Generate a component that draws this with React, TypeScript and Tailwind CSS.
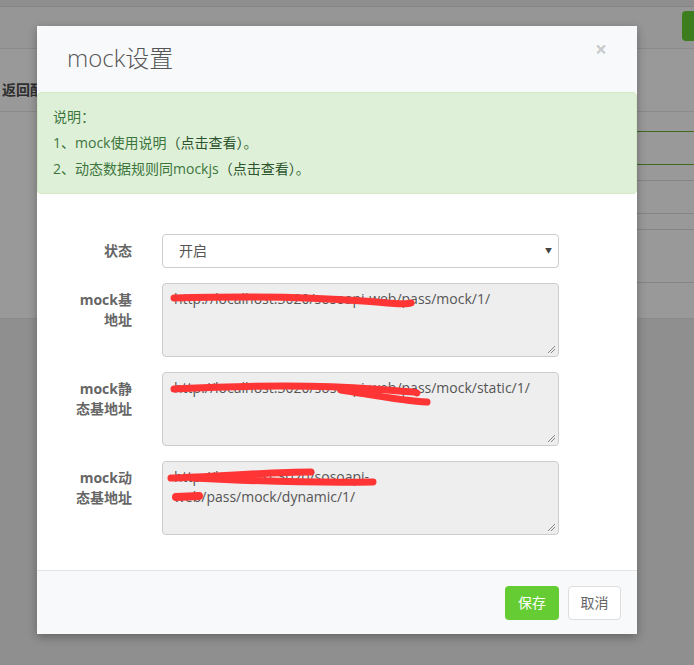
const font = { fontFamily: "'Open Sans', 'Noto Sans CJK SC', sans-serif" };

type Stroke = { d: string; w?: number };

function Grip() {
  return (
    <svg className="absolute right-[2px] bottom-[2px]" width="9" height="9" viewBox="0 0 9 9">
      <path d="M1 8 L8 1 M4 8 L8 4" stroke="#888" strokeWidth="1" />
    </svg>
  );
}

function MockField({ label, lines, strokes }: { label: React.ReactNode; lines: string[]; strokes: Stroke[] }) {
  return (
    <div className="flex">
      <label className="w-[95px] px-[15px] pt-[7px] text-right text-sm font-bold leading-5 text-[#666]">{label}</label>
      <div className="w-[427px] px-[15px]">
        <div className="relative h-[74px] rounded border border-[#ccc] bg-[#eee] px-[11px] pt-[5px] text-sm leading-5 text-[#555] whitespace-nowrap">
          {lines.map((l) => (
            <div key={l}>{l}</div>
          ))}
          <svg className="absolute left-0 top-0" width="397" height="74">
            {strokes.map((s, i) => (
              <path key={i} d={s.d} fill="none" stroke="#ff3434" strokeWidth={s.w ?? 7} strokeLinecap="round" />
            ))}
          </svg>
          <Grip />
        </div>
      </div>
    </div>
  );
}

export default function App() {
  return (
    <div className="relative h-[665px] w-[694px] overflow-hidden bg-[#8f8f90]" style={font}>
      {/* page behind the backdrop */}
      <div className="h-[7px] border-b border-[#868686] bg-[#8e8e8e]" />
      <div className="flex h-[42px] justify-end border-b border-[#8a8a8a] bg-[#969696] pt-[4px]">
        <div className="-mr-[20px] h-[30px] w-[32px] rounded bg-[#3d7d1e]" />
      </div>
      <div className="bg-[#999]">
        <div className="flex h-[63px] items-end border-b border-[#8a8a8a] pb-[11px] pl-[2px] text-sm font-bold text-[#2f2f2f]">
          返回配置
        </div>
        <div className="flex h-[207px] justify-end border-b border-[#8a8a8a]">
          <div className="w-[120px]">
            <div className="h-[20px] border-b border-[#41691f]" />
            <div className="h-[33px] border-b border-[#41691f]" />
            <div className="h-[16px] border-b border-[#858585]" />
            <div className="h-[33px] border-b border-[#858585]" />
            <div className="h-[16px] border-b border-[#858585]" />
            <div className="h-[53px] border-b border-[#858585]" />
          </div>
        </div>
      </div>

      {/* modal */}
      <div className="absolute left-[37px] top-[26px] w-[600px] bg-white shadow-[0_3px_9px_rgba(0,0,0,0.3)]">
        <div className="flex h-[66px] items-center justify-between bg-[#f8f9fb] pl-[30px] pr-[30px]">
          <h4 className="-mt-[2px] text-[24px] font-light text-[#555]">mock设置</h4>
          <span className="-mt-[20px] text-[21px] font-bold leading-none text-black/20">×</span>
        </div>
        <div className="rounded border border-[#d6e9c6] bg-[#dff0d8] px-[15px] pb-[11px] pt-[11px] text-sm leading-[26px] text-[#3c763d]">
          <div>说明：</div>
          <div>
            1、mock使用说明<span className="text-[#2b542c]">（点击查看）</span>。
          </div>
          <div>
            2、动态数据规则同mockjs<span className="text-[#2b542c]">（点击查看）</span>。
          </div>
        </div>

        <div className="flex flex-col gap-[15px] px-[15px] pb-[35px] pt-[40px]">
          <div className="flex">
            <label className="w-[95px] px-[15px] pt-[7px] text-right text-sm font-bold leading-5 text-[#666]">状态</label>
            <div className="w-[427px] px-[15px]">
              <div className="flex h-[34px] items-center justify-between rounded border border-[#ccc] bg-white pl-[16px] pr-[6px] text-sm text-[#555]">
                <span>开启</span>
                <span className="text-[7px] text-[#444]">▼</span>
              </div>
            </div>
          </div>
          <MockField
            label="mock基地址"
            lines={["http://localhost:3020/sosoapi-web/pass/mock/1/"]}
            strokes={[{ d: "M11 14 C 80 12, 150 13, 200 17 S 240 20 248 19", w: 7 }]}
          />
          <MockField
            label="mock静态基地址"
            lines={["http://localhost:3020/sosoapi-web/pass/mock/static/1/"]}
            strokes={[
              { d: "M11 16 C 90 12, 160 12, 210 16 S 248 18 254 20" },
              { d: "M178 17 C 210 22, 240 28, 264 29" },
            ]}
          />
          <MockField
            label="mock动态基地址"
            lines={["http://localhost:3020/sosoapi-", "web/pass/mock/dynamic/1/"]}
            strokes={[
              { d: "M8 16 C 60 14, 110 10, 148 10" },
              { d: "M30 16 C 90 19, 160 21, 210 20" },
              { d: "M13 35 L 36 34", w: 8 },
            ]}
          />
        </div>

        <div className="flex h-[64px] items-center justify-end gap-[9px] border-t border-[#e5e5e5] bg-[#f8f9fb] pr-[16px]">
          <button className="h-[34px] w-[54px] rounded bg-[#66cc33] text-sm text-white">保存</button>
          <button className="h-[34px] w-[53px] rounded border border-[#ddd] bg-white text-sm text-[#666]">取消</button>
        </div>
      </div>
    </div>
  );
}
